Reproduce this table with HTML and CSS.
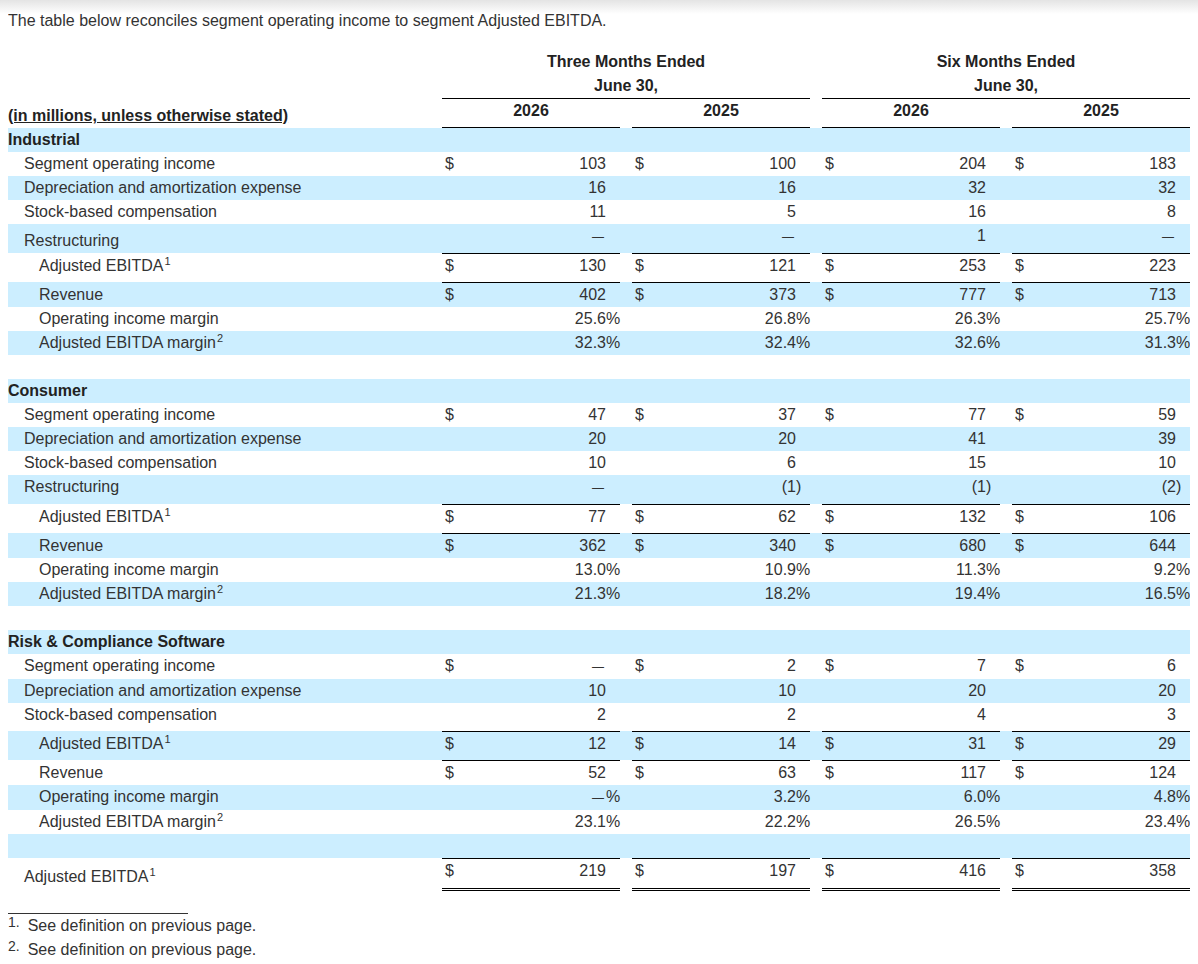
FILE: index.html
```html
<!DOCTYPE html>
<html lang="en">
<head>
<meta charset="utf-8">
<title>Segment Adjusted EBITDA</title>
<link rel="stylesheet" href="styles.css">
</head>
<body>
<p class="intro">The table below reconciles segment operating income to segment Adjusted EBITDA.</p>

<div class="tbl">
  <div class="row hdr1">
    <div></div>
    <div class="grp">Three Months Ended<br>June 30,</div>
    <div class="grp">Six Months Ended<br>June 30,</div>
  </div>
  <div class="row hdr2">
    <div class="units">(in millions, unless otherwise stated)</div>
    <div class="yr">2026</div>
    <div class="yr">2025</div>
    <div class="yr">2026</div>
    <div class="yr">2025</div>
  </div>

  <!-- Industrial -->
  <div class="row b"><div class="lbl sec">Industrial</div></div>
  <div class="row">
    <div class="lbl">Segment operating income</div>
    <div class="v"><span class="c">$</span><span class="n">103</span></div>
    <div class="v"><span class="c">$</span><span class="n">100</span></div>
    <div class="v"><span class="c">$</span><span class="n">204</span></div>
    <div class="v"><span class="c">$</span><span class="n">183</span></div>
  </div>
  <div class="row b">
    <div class="lbl">Depreciation and amortization expense</div>
    <div class="v"><span class="n">16</span></div>
    <div class="v"><span class="n">16</span></div>
    <div class="v"><span class="n">32</span></div>
    <div class="v"><span class="n">32</span></div>
  </div>
  <div class="row">
    <div class="lbl">Stock-based compensation</div>
    <div class="v"><span class="n">11</span></div>
    <div class="v"><span class="n">5</span></div>
    <div class="v"><span class="n">16</span></div>
    <div class="v"><span class="n">8</span></div>
  </div>
  <div class="row b tall">
    <div class="lbl low">Restructuring</div>
    <div class="v"><span class="n"><span class="d">—</span></span></div>
    <div class="v"><span class="n"><span class="d">—</span></span></div>
    <div class="v"><span class="n">1</span></div>
    <div class="v"><span class="n"><span class="d">—</span></span></div>
  </div>
  <div class="row line tall">
    <div class="lbl sub">Adjusted EBITDA<sup>1</sup></div>
    <div class="v"><span class="c">$</span><span class="n">130</span></div>
    <div class="v"><span class="c">$</span><span class="n">121</span></div>
    <div class="v"><span class="c">$</span><span class="n">253</span></div>
    <div class="v"><span class="c">$</span><span class="n">223</span></div>
  </div>
  <div class="row b line">
    <div class="lbl sub">Revenue</div>
    <div class="v"><span class="c">$</span><span class="n">402</span></div>
    <div class="v"><span class="c">$</span><span class="n">373</span></div>
    <div class="v"><span class="c">$</span><span class="n">777</span></div>
    <div class="v"><span class="c">$</span><span class="n">713</span></div>
  </div>
  <div class="row">
    <div class="lbl sub">Operating income margin</div>
    <div class="v"><span class="n">25.6</span><span class="s">%</span></div>
    <div class="v"><span class="n">26.8</span><span class="s">%</span></div>
    <div class="v"><span class="n">26.3</span><span class="s">%</span></div>
    <div class="v"><span class="n">25.7</span><span class="s">%</span></div>
  </div>
  <div class="row b">
    <div class="lbl sub">Adjusted EBITDA margin<sup>2</sup></div>
    <div class="v"><span class="n">32.3</span><span class="s">%</span></div>
    <div class="v"><span class="n">32.4</span><span class="s">%</span></div>
    <div class="v"><span class="n">32.6</span><span class="s">%</span></div>
    <div class="v"><span class="n">31.3</span><span class="s">%</span></div>
  </div>
  <div class="row gap"></div>

  <!-- Consumer -->
  <div class="row b"><div class="lbl sec">Consumer</div></div>
  <div class="row">
    <div class="lbl">Segment operating income</div>
    <div class="v"><span class="c">$</span><span class="n">47</span></div>
    <div class="v"><span class="c">$</span><span class="n">37</span></div>
    <div class="v"><span class="c">$</span><span class="n">77</span></div>
    <div class="v"><span class="c">$</span><span class="n">59</span></div>
  </div>
  <div class="row b">
    <div class="lbl">Depreciation and amortization expense</div>
    <div class="v"><span class="n">20</span></div>
    <div class="v"><span class="n">20</span></div>
    <div class="v"><span class="n">41</span></div>
    <div class="v"><span class="n">39</span></div>
  </div>
  <div class="row">
    <div class="lbl">Stock-based compensation</div>
    <div class="v"><span class="n">10</span></div>
    <div class="v"><span class="n">6</span></div>
    <div class="v"><span class="n">15</span></div>
    <div class="v"><span class="n">10</span></div>
  </div>
  <div class="row b tall">
    <div class="lbl">Restructuring</div>
    <div class="v"><span class="n"><span class="d">—</span></span></div>
    <div class="v"><span class="n">(1</span><span class="s">)</span></div>
    <div class="v"><span class="n">(1</span><span class="s">)</span></div>
    <div class="v"><span class="n">(2</span><span class="s">)</span></div>
  </div>
  <div class="row line tall">
    <div class="lbl sub">Adjusted EBITDA<sup>1</sup></div>
    <div class="v"><span class="c">$</span><span class="n">77</span></div>
    <div class="v"><span class="c">$</span><span class="n">62</span></div>
    <div class="v"><span class="c">$</span><span class="n">132</span></div>
    <div class="v"><span class="c">$</span><span class="n">106</span></div>
  </div>
  <div class="row b line">
    <div class="lbl sub">Revenue</div>
    <div class="v"><span class="c">$</span><span class="n">362</span></div>
    <div class="v"><span class="c">$</span><span class="n">340</span></div>
    <div class="v"><span class="c">$</span><span class="n">680</span></div>
    <div class="v"><span class="c">$</span><span class="n">644</span></div>
  </div>
  <div class="row">
    <div class="lbl sub">Operating income margin</div>
    <div class="v"><span class="n">13.0</span><span class="s">%</span></div>
    <div class="v"><span class="n">10.9</span><span class="s">%</span></div>
    <div class="v"><span class="n">11.3</span><span class="s">%</span></div>
    <div class="v"><span class="n">9.2</span><span class="s">%</span></div>
  </div>
  <div class="row b">
    <div class="lbl sub">Adjusted EBITDA margin<sup>2</sup></div>
    <div class="v"><span class="n">21.3</span><span class="s">%</span></div>
    <div class="v"><span class="n">18.2</span><span class="s">%</span></div>
    <div class="v"><span class="n">19.4</span><span class="s">%</span></div>
    <div class="v"><span class="n">16.5</span><span class="s">%</span></div>
  </div>
  <div class="row gap"></div>

  <!-- Risk & Compliance Software -->
  <div class="row b"><div class="lbl sec">Risk &amp; Compliance Software</div></div>
  <div class="row">
    <div class="lbl">Segment operating income</div>
    <div class="v"><span class="c">$</span><span class="n"><span class="d">—</span></span></div>
    <div class="v"><span class="c">$</span><span class="n">2</span></div>
    <div class="v"><span class="c">$</span><span class="n">7</span></div>
    <div class="v"><span class="c">$</span><span class="n">6</span></div>
  </div>
  <div class="row b">
    <div class="lbl">Depreciation and amortization expense</div>
    <div class="v"><span class="n">10</span></div>
    <div class="v"><span class="n">10</span></div>
    <div class="v"><span class="n">20</span></div>
    <div class="v"><span class="n">20</span></div>
  </div>
  <div class="row tall">
    <div class="lbl">Stock-based compensation</div>
    <div class="v"><span class="n">2</span></div>
    <div class="v"><span class="n">2</span></div>
    <div class="v"><span class="n">4</span></div>
    <div class="v"><span class="n">3</span></div>
  </div>
  <div class="row b line tall">
    <div class="lbl sub">Adjusted EBITDA<sup>1</sup></div>
    <div class="v"><span class="c">$</span><span class="n">12</span></div>
    <div class="v"><span class="c">$</span><span class="n">14</span></div>
    <div class="v"><span class="c">$</span><span class="n">31</span></div>
    <div class="v"><span class="c">$</span><span class="n">29</span></div>
  </div>
  <div class="row line">
    <div class="lbl sub">Revenue</div>
    <div class="v"><span class="c">$</span><span class="n">52</span></div>
    <div class="v"><span class="c">$</span><span class="n">63</span></div>
    <div class="v"><span class="c">$</span><span class="n">117</span></div>
    <div class="v"><span class="c">$</span><span class="n">124</span></div>
  </div>
  <div class="row b">
    <div class="lbl sub">Operating income margin</div>
    <div class="v"><span class="n"><span class="d">—</span></span><span class="s">%</span></div>
    <div class="v"><span class="n">3.2</span><span class="s">%</span></div>
    <div class="v"><span class="n">6.0</span><span class="s">%</span></div>
    <div class="v"><span class="n">4.8</span><span class="s">%</span></div>
  </div>
  <div class="row">
    <div class="lbl sub">Adjusted EBITDA margin<sup>2</sup></div>
    <div class="v"><span class="n">23.1</span><span class="s">%</span></div>
    <div class="v"><span class="n">22.2</span><span class="s">%</span></div>
    <div class="v"><span class="n">26.5</span><span class="s">%</span></div>
    <div class="v"><span class="n">23.4</span><span class="s">%</span></div>
  </div>
  <div class="row b gap"></div>

  <div class="row total">
    <div class="lbl">Adjusted EBITDA<sup>1</sup></div>
    <div class="v"><span class="c">$</span><span class="n">219</span></div>
    <div class="v"><span class="c">$</span><span class="n">197</span></div>
    <div class="v"><span class="c">$</span><span class="n">416</span></div>
    <div class="v"><span class="c">$</span><span class="n">358</span></div>
  </div>
</div>

<div class="rule"></div>
<p class="fn"><sup>1.</sup>See definition on previous page.</p>
<p class="fn"><sup>2.</sup>See definition on previous page.</p>
</body>
</html>
```

FILE: styles.css
```css
* {
  box-sizing: border-box;
}

html {
  background: #fff linear-gradient(#e4e4e4, #fff 14px) no-repeat;
}

body {
  margin: 8px;
  font-family: "Liberation Sans", Arial, sans-serif;
  font-size: 16px;
  line-height: 24px;
  color: #333;
}

.intro {
  margin: 1px 0 17px;
}

.row {
  display: grid;
  grid-template-columns: 422px repeat(4, 178px);
  column-gap: 12px;
  min-height: 24px;
}

.row.b {
  background: #cceeff;
}

.grp {
  grid-column: span 2;
  text-align: center;
  font-weight: bold;
  color: #222;
  border-bottom: 1px solid #000;
}

.yr {
  text-align: center;
  font-weight: bold;
  color: #222;
  padding-bottom: 4px;
  border-bottom: 1px solid #000;
}

.units {
  align-self: end;
  font-weight: bold;
  color: #222;
  text-decoration: underline;
}

.lbl {
  padding-left: 16px;
}

.lbl.sec {
  padding-left: 0;
  font-weight: bold;
  color: #222;
}

.lbl.sub {
  padding-left: 31px;
}

.lbl.low {
  align-self: end;
  padding-bottom: 0 !important;
}

.tall > * {
  padding-bottom: 4px;
}

.line .v {
  border-top: 1px solid #000;
}

.line .lbl {
  padding-top: 1px;
}

.v {
  display: grid;
  grid-template-columns: auto 1fr 14px;
  padding-left: 3px;
}

.v .c {
  grid-column: 1;
}

.v .n {
  grid-column: 2;
  text-align: right;
}

.v .s {
  grid-column: 3;
}

.d {
  font-size: 12px;
  margin-right: 2px;
}

sup {
  font-size: 11px;
  line-height: 0;
  vertical-align: 6px;
  margin-left: 1px;
}

.total {
  min-height: 38px;
}

.total .lbl {
  align-self: center;
}

.total .v {
  align-self: start;
  border-top: 1px solid #000;
  border-bottom: 3px double #000;
  padding-bottom: 5px;
}

.rule {
  width: 180px;
  margin-top: 17px;
  border-top: 1px solid #333;
}

.fn {
  margin: 0;
}

.fn:first-of-type {
  margin-top: 1px;
}

.fn sup {
  font-size: 14px;
  vertical-align: 4px;
  margin-left: 0;
  margin-right: 8px;
}
```
